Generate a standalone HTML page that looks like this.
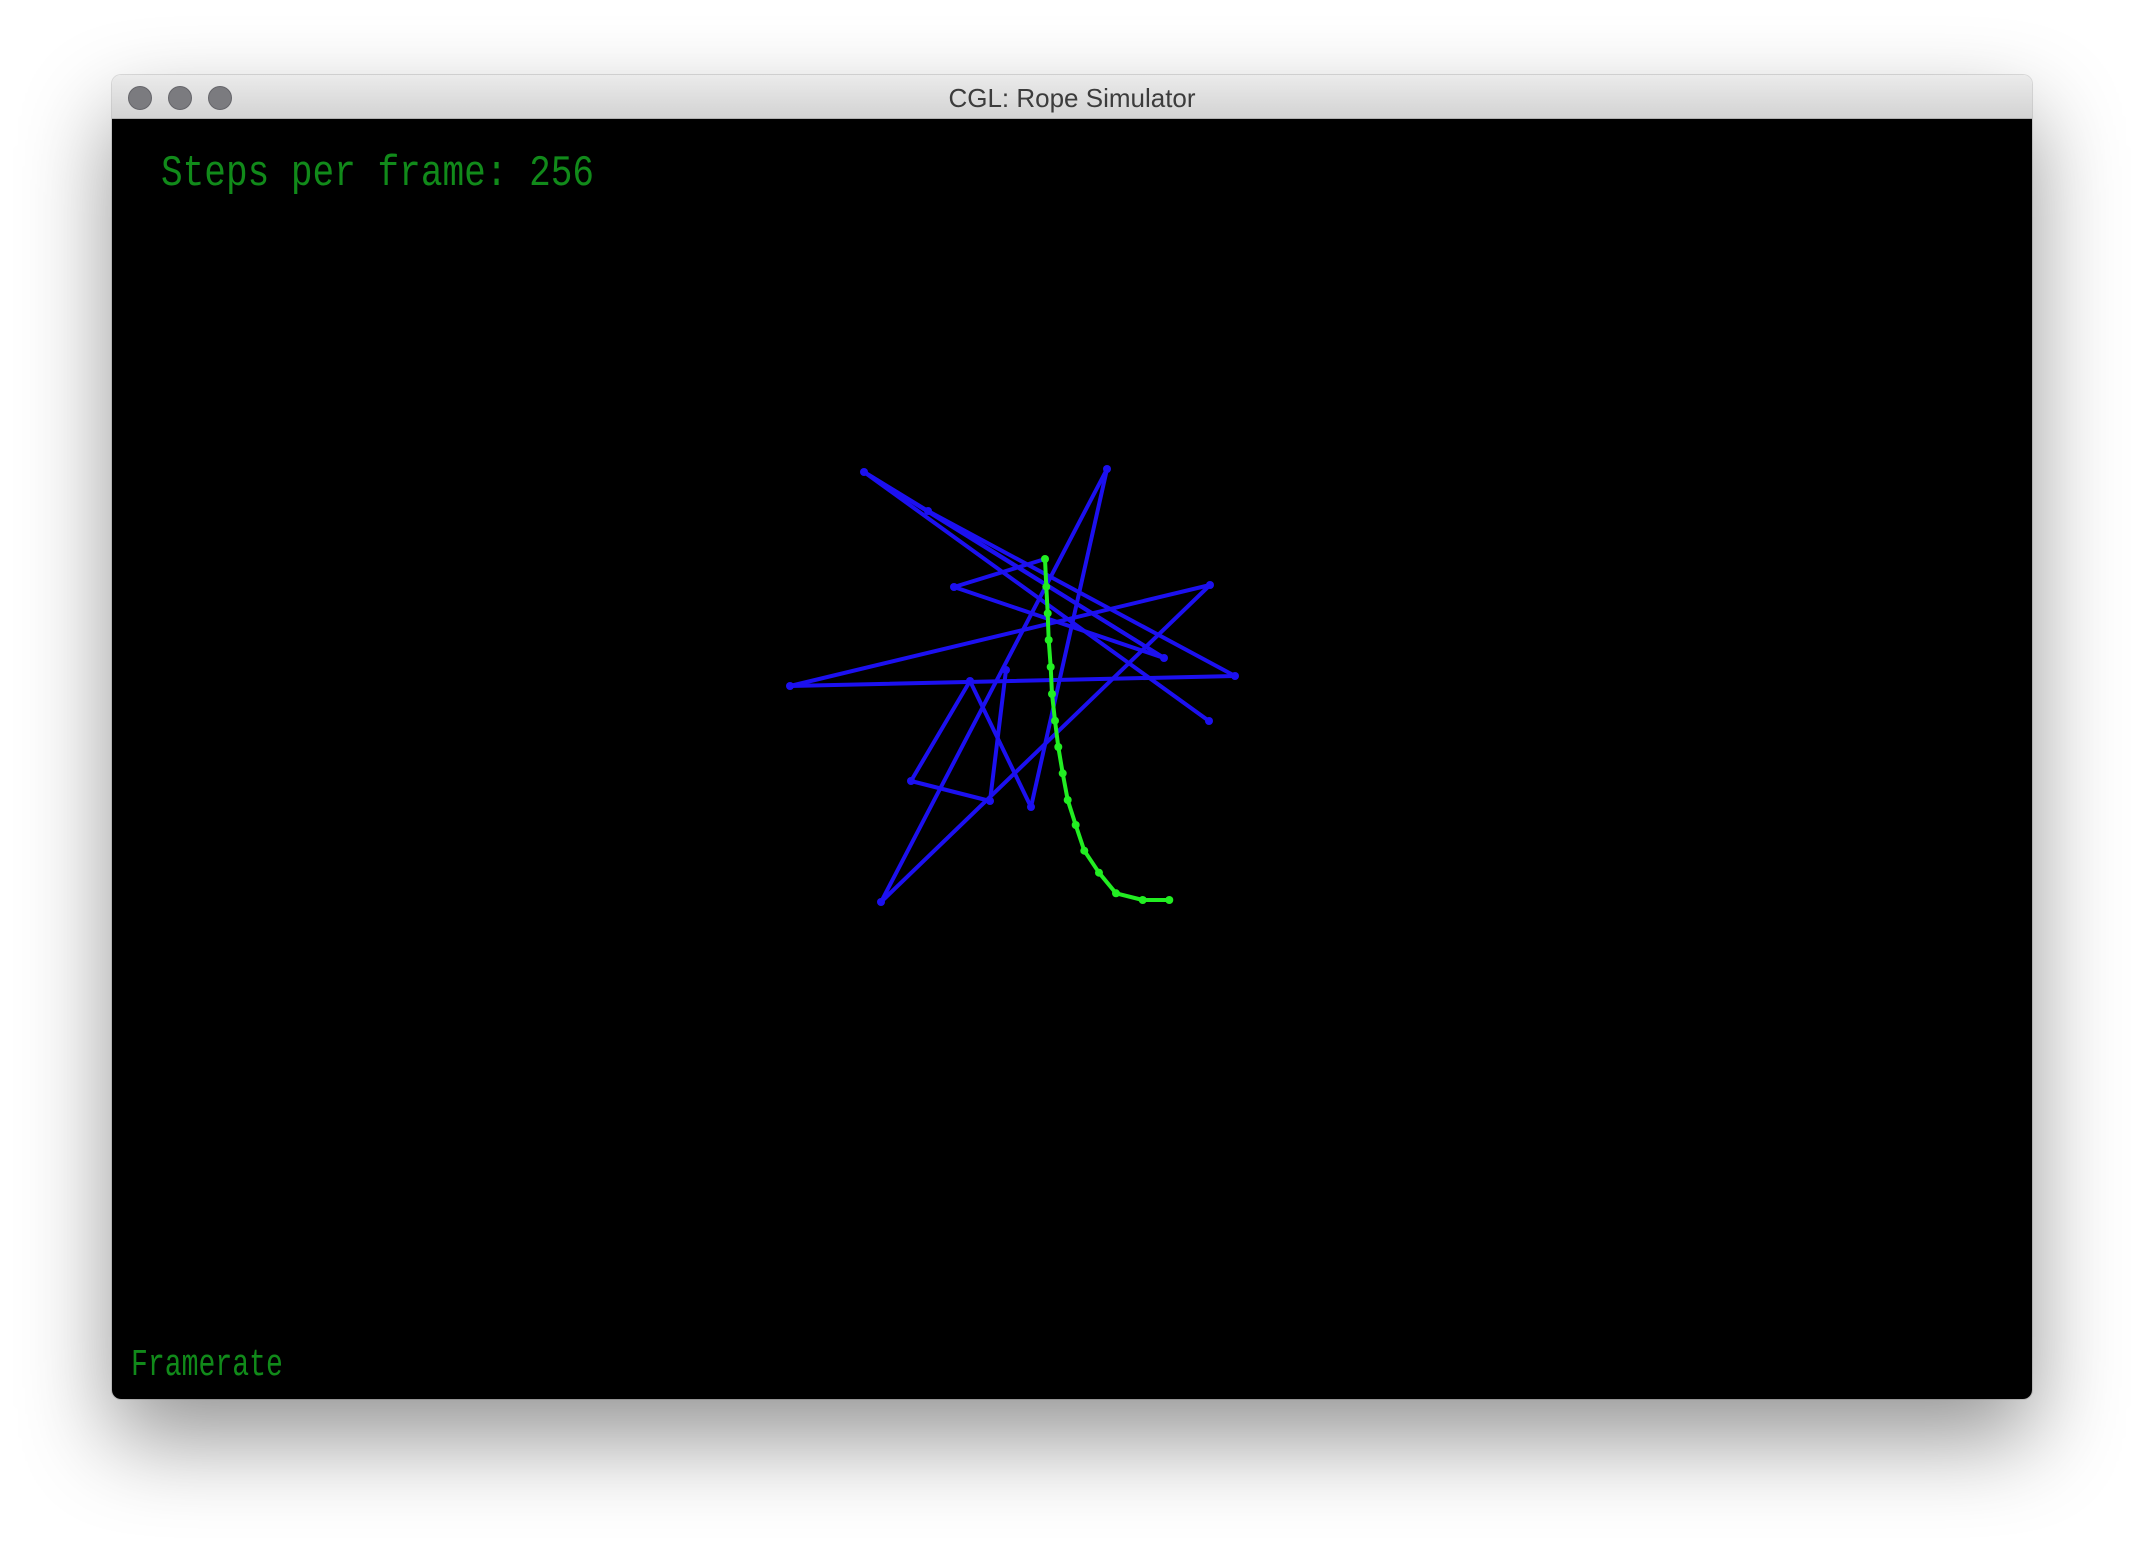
<!DOCTYPE html>
<html><head><meta charset="utf-8"><style>
html,body{margin:0;padding:0;width:2144px;height:1548px;background:#fff;overflow:hidden}
.win{position:absolute;left:112px;top:75px;width:1920px;height:1324px;border-radius:9px;overflow:hidden;box-shadow:0 40px 90px rgba(0,0,0,0.42),0 0 0 1px rgba(0,0,0,0.12)}
.tb{position:absolute;left:0;top:0;width:1920px;height:44px;background:linear-gradient(#ebebeb,#d3d3d3);border-bottom:1px solid #b0b0b0;box-sizing:border-box}
.dot{position:absolute;top:11px;width:22px;height:22px;border-radius:50%;background:#7b7b7f;border:1px solid #65656a}
.title{position:absolute;left:0;width:1920px;top:8px;text-align:center;font:26px "Liberation Sans",sans-serif;color:#3c3c3c}
.content{position:absolute;left:0;top:44px;width:1920px;height:1280px;background:#000}
.t1{position:absolute;left:49px;top:33px;font:44px/44px "Liberation Mono",monospace;color:#118a1a;transform:scaleX(0.82);transform-origin:0 0;white-space:nowrap}
.t2{position:absolute;left:19px;top:1228px;font:38px/38px "Liberation Mono",monospace;color:#118a1a;transform:scaleX(0.74);transform-origin:0 0;white-space:nowrap}
svg{position:absolute;left:0;top:0}
</style></head><body>
<div class="win">
 <div class="tb">
  <div class="dot" style="left:16px"></div>
  <div class="dot" style="left:56px"></div>
  <div class="dot" style="left:96px"></div>
  <div class="title">CGL: Rope Simulator</div>
 </div>
 <div class="content">
  <div class="t1">Steps per frame: 256</div>
  <div class="t2">Framerate</div>
 </div>
</div>
<svg width="2144" height="1548" viewBox="0 0 2144 1548">
 <g stroke="#1c10f0" stroke-width="4" stroke-linecap="round" fill="none">
  <line x1="864" y1="472" x2="1209" y2="721"/>
  <line x1="864" y1="472" x2="1164" y2="658"/>
  <line x1="928" y1="511" x2="1235" y2="676"/>
  <line x1="864" y1="472" x2="928" y2="511"/>
  <line x1="928" y1="511" x2="1164" y2="658"/>
  <line x1="954" y1="587" x2="1045" y2="559"/>
  <line x1="954" y1="587" x2="1164" y2="658"/>
  <line x1="1210" y1="585" x2="790" y2="686"/>
  <line x1="790" y1="686" x2="1235" y2="676"/>
  <line x1="1210" y1="585" x2="881" y2="902"/>
  <line x1="881" y1="902" x2="1107" y2="469"/>
  <line x1="1107" y1="469" x2="1031" y2="807"/>
  <line x1="970" y1="681" x2="911" y2="781"/>
  <line x1="970" y1="681" x2="1031" y2="807"/>
  <line x1="911" y1="781" x2="990" y2="801"/>
  <line x1="990" y1="801" x2="1006" y2="670"/>
 </g>
 <g fill="#1c10f0">
  <circle cx="864" cy="472" r="4"/><circle cx="1107" cy="469" r="4"/><circle cx="928" cy="511" r="4"/>
  <circle cx="954" cy="587" r="4"/><circle cx="1210" cy="585" r="4"/><circle cx="1164" cy="658" r="4"/>
  <circle cx="1235" cy="676" r="4"/><circle cx="790" cy="686" r="4"/><circle cx="1209" cy="721" r="4"/>
  <circle cx="970" cy="681" r="4"/><circle cx="1006" cy="670" r="4"/><circle cx="911" cy="781" r="4"/>
  <circle cx="990" cy="801" r="4"/><circle cx="1031" cy="807" r="4"/><circle cx="881" cy="902" r="4"/>
 </g>
 <polyline fill="none" stroke="#22ee22" stroke-width="4" stroke-linejoin="round" points="1045,559 1046.3,586.7 1047.7,613.3 1048.7,640 1050.7,667 1052,694 1055,720.7 1058.3,747 1062.7,773.3 1067.7,800 1075.7,825 1084.3,850.7 1099,872.7 1116,893.3 1142.7,900 1169.3,900"/>
 <g fill="#22ee22">
  <circle cx="1045" cy="559" r="4"/><circle cx="1046.3" cy="586.7" r="4"/><circle cx="1047.7" cy="613.3" r="4"/>
  <circle cx="1048.7" cy="640" r="4"/><circle cx="1050.7" cy="667" r="4"/><circle cx="1052" cy="694" r="4"/>
  <circle cx="1055" cy="720.7" r="4"/><circle cx="1058.3" cy="747" r="4"/><circle cx="1062.7" cy="773.3" r="4"/>
  <circle cx="1067.7" cy="800" r="4"/><circle cx="1075.7" cy="825" r="4"/><circle cx="1084.3" cy="850.7" r="4"/>
  <circle cx="1099" cy="872.7" r="4"/><circle cx="1116" cy="893.3" r="4"/><circle cx="1142.7" cy="900" r="4"/>
  <circle cx="1169.3" cy="900" r="4"/>
 </g>
</svg>
</body></html>
